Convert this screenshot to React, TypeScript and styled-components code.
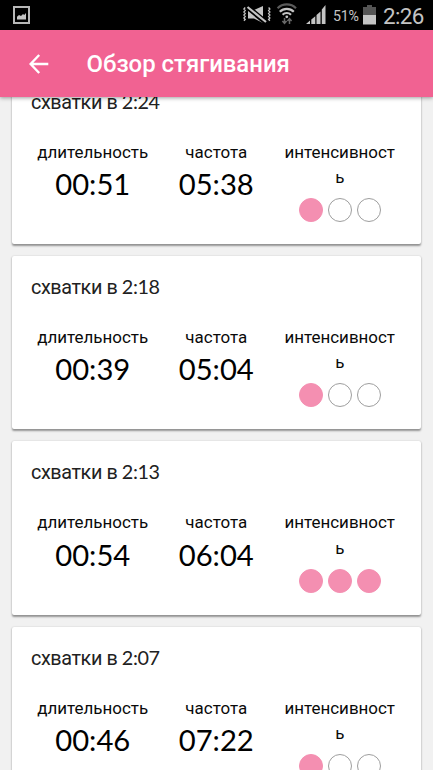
import React from "react";
import styled, { createGlobalStyle } from "styled-components";

const GlobalStyle = createGlobalStyle`
  * { box-sizing: border-box; }
  html, body { margin: 0; padding: 0; background: #f1f1f1; overflow: hidden; }
`;

const Screen = styled.div`
  display: flex;
  flex-direction: column;
  width: 433px;
  height: 770px;
  overflow: hidden;
  background: #f1f1f1;
  font-family: Roboto, "Noto Sans", sans-serif;
`;

const StatusBar = styled.div`
  display: flex;
  align-items: center;
  flex: none;
  height: 30px;
  padding: 0 8px 0 13px;
  background: #000;
  color: #c4c4c4;
`;

const StatusIcons = styled.svg`
  display: block;
  margin-left: auto;
`;

const BatteryText = styled.span`
  width: 28px;
  margin-left: 6px;
  font-size: 14.2px;
  line-height: 30px;
  letter-spacing: -0.2px;
  white-space: nowrap;
  padding-top: 1px;
`;

const BatteryIcon = styled.svg`
  display: block;
  margin-left: 2px;
`;

const Clock = styled.span`
  width: 42px;
  margin-left: 7px;
  font-size: 22.4px;
  line-height: 30px;
  letter-spacing: -0.6px;
  white-space: nowrap;
  padding-top: 1px;
`;

const AppBar = styled.header`
  position: relative;
  z-index: 1;
  display: flex;
  align-items: center;
  flex: none;
  height: 67px;
  padding-left: 29px;
  background: #f16292;
  color: #fff;
  box-shadow: 0 1px 4px rgba(0, 0, 0, 0.38);
`;

const BackButton = styled.button`
  display: block;
  width: 20px;
  height: 20px;
  margin: 0 37.5px 0 0;
  padding: 0;
  border: 0;
  background: none;
  color: inherit;

  svg { display: block; }
`;

const Title = styled.h1`
  margin: 0;
  font-size: 23.9px;
  font-weight: 500;
  line-height: 30px;
  white-space: nowrap;
`;

const List = styled.main`
  flex: 1;
  min-height: 0;
  overflow: hidden;
  padding: 0 12px;
`;

const Cards = styled.div`
  display: flex;
  flex-direction: column;
  gap: 12px;
  margin-top: -26.33px;
`;

const Card = styled.section`
  flex: none;
  height: 173.33px;
  padding: 17.9px 19px;
  border-radius: 2px;
  background: #fff;
  box-shadow: 0 1.5px 2px rgba(0, 0, 0, 0.38), 0 0 2px rgba(0, 0, 0, 0.1);
`;

const CardTitle = styled.h2`
  height: 24px;
  margin: 0;
  color: #212121;
  font-size: 19.8px;
  font-weight: 400;
  line-height: 24px;
  letter-spacing: -0.4px;
  white-space: nowrap;
`;

const Digits = styled.span`
  font-family: Lato, Roboto, sans-serif;
`;

const Stats = styled.div`
  display: grid;
  grid-template-columns: repeat(3, 123.5px);
  margin-top: 27px;
`;

const Stat = styled.div`
  display: flex;
  flex-direction: column;
  align-items: center;
`;

const Label = styled.div`
  width: 118px;
  color: #0a0a0a;
  font-size: 16.95px;
  line-height: 25.3px;
  text-align: center;
  overflow-wrap: anywhere;
`;

const Value = styled.div`
  color: #000;
  font-family: Lato, Roboto, sans-serif;
  font-size: 29.2px;
  line-height: 37px;
`;

const Dots = styled.div`
  display: flex;
  gap: 5px;
  margin: 8px 0 0 1px;
`;

const Dot = styled.span<{ $filled: boolean }>`
  width: 24px;
  height: 24px;
  border: 1px solid ${(p) => (p.$filled ? "#f48fb1" : "#9e9e9e")};
  border-radius: 50%;
  background: ${(p) => (p.$filled ? "#f48fb1" : "#fff")};
`;

const contractions = [
  { time: "2:24", duration: "00:51", frequency: "05:38", intensity: 1 },
  { time: "2:18", duration: "00:39", frequency: "05:04", intensity: 1 },
  { time: "2:13", duration: "00:54", frequency: "06:04", intensity: 3 },
  { time: "2:07", duration: "00:46", frequency: "07:22", intensity: 1 },
];

export default function App() {
  return (
    <Screen>
      <GlobalStyle />
      <StatusBar>
        <svg width="17" height="18" viewBox="0 0 17 18">
          <rect x="1" y="1" width="15" height="16" fill="none" stroke="#b8b8b8" strokeWidth="2" />
          <path d="M4 13.5v-2.8l2-1.8 2 1.2 2-2 1.2.8L13 7v6.5z" fill="#c4c4c4" />
        </svg>
        <StatusIcons width="84" height="30" viewBox="0 0 84 30" fill="none">
          <g stroke="#c4c4c4" strokeWidth="1.3">
            <path d="M2.2 7.5L.9 9l1.3 1.5L.9 12l1.3 1.5L.9 15l1.3 1.5L.9 18l1.3 1.5-1.3 1.2" />
            <path d="M25.6 7.5L26.9 9l-1.3 1.5 1.3 1.5-1.3 1.5 1.3 1.5-1.3 1.5 1.3 1.5-1.3 1.5 1.3 1.2" />
          </g>
          <path d="M5 10h6l9-4v17l-9-4.5H5z" fill="#c4c4c4" />
          <path d="M5 7.5l18 15" stroke="#000" strokeWidth="5.2" />
          <path d="M4.5 7l18.5 15" stroke="#c4c4c4" strokeWidth="2.2" />
          <g strokeWidth="2.2">
            <path d="M34.6 8.2a13 13 0 0 1 18.4 0" stroke="#5b5b5b" />
            <path d="M36.8 11.7a10 10 0 0 1 14 0" stroke="#c4c4c4" />
            <path d="M39.6 14.7a6 6 0 0 1 8.4 0" stroke="#c4c4c4" />
          </g>
          <circle cx="43.8" cy="16.8" r="1.4" fill="#c4c4c4" />
          <path d="M41.5 18v5M39.4 21l2.1 2.3 2.1-2.3M46.5 24v-5M44.4 21l2.1-2.3 2.1 2.3" stroke="#686868" strokeWidth="1.5" />
          <path d="M63 24l4-3.6V24zM68.3 19.5l4-3.3V24h-4zM73.5 15l4-3.5V24h-4zM78.8 9.5L82.5 5v19h-3.7z" fill="#c4c4c4" />
        </StatusIcons>
        <BatteryText>51%</BatteryText>
        <BatteryIcon width="13" height="20" viewBox="0 0 13 20">
          <path d="M4 0h5v2h4v9H0V2h4z" fill="#555" />
          <path d="M0 10h13v9.5H0z" fill="#c4c4c4" />
        </BatteryIcon>
        <Clock>2:26</Clock>
      </StatusBar>
      <AppBar>
        <BackButton aria-label="Назад">
          <svg width="20" height="20" viewBox="0 0 20 20" fill="none" stroke="#fff" strokeWidth="2.4">
            <path d="M10.2 1L1.6 10l8.6 9M1.5 10H19.3" />
          </svg>
        </BackButton>
        <Title>Обзор стягивания</Title>
      </AppBar>
      <List>
        <Cards>
          {contractions.map((c) => (
            <Card key={c.time}>
              <CardTitle>
                схватки в <Digits>{c.time}</Digits>
              </CardTitle>
              <Stats>
                <Stat>
                  <Label>длительность</Label>
                  <Value>{c.duration}</Value>
                </Stat>
                <Stat>
                  <Label>частота</Label>
                  <Value>{c.frequency}</Value>
                </Stat>
                <Stat>
                  <Label>интенсивность</Label>
                  <Dots>
                    {[1, 2, 3].map((n) => (
                      <Dot key={n} $filled={n <= c.intensity} />
                    ))}
                  </Dots>
                </Stat>
              </Stats>
            </Card>
          ))}
        </Cards>
      </List>
    </Screen>
  );
}
